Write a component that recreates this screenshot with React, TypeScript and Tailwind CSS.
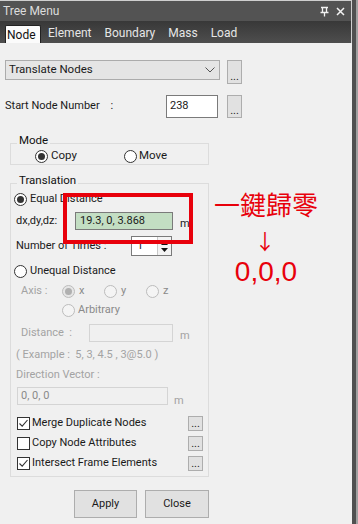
import React from 'react';

const font = { fontFamily: 'Roboto, "Noto Sans", sans-serif' };

function Radio({ checked = false, disabled = false }: { checked?: boolean; disabled?: boolean }) {
  return (
    <span
      className={`flex h-[13px] w-[13px] shrink-0 items-center justify-center rounded-full border ${
        disabled ? (checked ? 'border-[#bcbcbc] bg-[#e6e6e6]' : 'border-[#bcbcbc] bg-[#f4f4f4]') : 'border-[#333] bg-white'
      }`}
    >
      {checked && <span className={`h-[7px] w-[7px] rounded-full ${disabled ? 'bg-[#b0b0b0]' : 'bg-[#333]'}`} />}
    </span>
  );
}

function Check({ checked = false }: { checked?: boolean }) {
  return (
    <span className="flex h-[13px] w-[13px] shrink-0 items-center justify-center border border-[#333] bg-white">
      {checked && (
        <svg width="11" height="11" viewBox="0 0 11 11">
          <path d="M1.5 5.5 L4.2 8.2 L9.5 2" fill="none" stroke="#333" strokeWidth="1.1" />
        </svg>
      )}
    </span>
  );
}

function Dots({ h = 'h-[15px]' }: { h?: string }) {
  return (
    <span className={`flex w-[15px] ${h} shrink-0 items-end justify-center border border-[#adadad] bg-[#e1e1e1] pb-[1px] text-[11px] leading-[11px] text-[#222]`}>
      ...
    </span>
  );
}

function Group({ label, className, children }: { label: string; className?: string; children: React.ReactNode }) {
  return (
    <div className={`relative mx-[10px] w-[199px] border border-[#dcdcdc] ${className ?? ''}`}>
      <span className="absolute left-[6px] top-[-11px] bg-[#f0f0f0] px-[2px] text-[11.5px] leading-[14px] text-[#111]">{label}</span>
      {children}
    </div>
  );
}

export default function App() {
  return (
    <div className="flex h-[524px] w-[358px] bg-[#f0f0f0] text-[11px] text-[#1a1a1a]" style={font}>
      <div className="relative flex w-[352px] flex-col">
        {/* title bar */}
        <div className="flex h-[21px] items-center border-t border-r border-[#cfcfcf] bg-[#535353] pl-[3px] pr-[6px] text-[12px] text-[#dcdcdc]">
          <span className="flex-1">Tree Menu</span>
          <svg width="9" height="11" viewBox="0 0 9 11" className="mr-[7px]">
            <path d="M1 1.5 H8 M2.5 1.5 V6 M6.5 1.5 V6 M0.5 6.5 H8.5 M4.5 6.5 V10.5" stroke="#f2f2f2" strokeWidth="1.3" fill="none" />
          </svg>
          <svg width="9" height="9" viewBox="0 0 9 9">
            <path d="M1 1 L8 8 M8 1 L1 8" stroke="#f2f2f2" strokeWidth="1.5" />
          </svg>
        </div>
        {/* tab bar */}
        <div className="flex h-[22px] items-end border-r border-[#cfcfcf] bg-gradient-to-b from-[#383838] to-[#4e4e4e] text-[12px] text-[#e6e6e6]">
          <span className="ml-[5px] flex h-[18px] w-[36px] items-center rounded-t-[2px] border border-b-0 border-[#222] bg-[#fbfbfb] pl-[1px] pt-[1px] text-[#111]">
            Node
          </span>
          <span className="mb-[1px] ml-[7px]">Element</span>
          <span className="mb-[1px] ml-[13px]">Boundary</span>
          <span className="mb-[1px] ml-[13px]">Mass</span>
          <span className="mb-[1px] ml-[13px]">Load</span>
        </div>

        {/* content */}
        <div className="flex flex-col pt-[17px]">
          <div className="flex h-[24px] items-start">
            <div className="ml-[5px] flex h-[20px] w-[215px] items-center border border-[#acacac] bg-[#e5e5e5] pl-[3px] pr-[4px] text-[11.5px]">
              <span className="flex-1">Translate Nodes</span>
              <svg width="10" height="6" viewBox="0 0 10 6">
                <path d="M0.5 0.5 L5 5 L9.5 0.5" fill="none" stroke="#555" strokeWidth="1" />
              </svg>
            </div>
            <span className="ml-[7px]">
              <Dots h="h-[24px]" />
            </span>
          </div>

          <div className="mt-[11px] flex h-[23px] items-center">
            <span className="ml-[5px] w-[161px]">Start Node Number&nbsp;&nbsp;&nbsp;&nbsp;:</span>
            <span className="flex h-[23px] w-[52px] items-start border border-[#7a7a7a] bg-white pl-[3px] pt-[2px]">238</span>
            <span className="ml-[9px]">
              <Dots h="h-[23px]" />
            </span>
          </div>

          <Group label="Mode" className="mt-[25px]">
            <div className="flex h-[20px] items-center pt-[4px] text-[11.5px]">
              <span className="ml-[24px]">
                <Radio checked />
              </span>
              <span className="ml-[3px] w-[73px]">Copy</span>
              <Radio />
              <span className="ml-[2px]">Move</span>
            </div>
          </Group>

          <Group label="Translation" className="mt-[18px] pb-[5px]">
            <div className="mt-[7px] flex h-[16px] items-center pl-[3px]">
              <Radio checked />
              <span className="ml-[3px]">Equal Distance</span>
            </div>
            <div className="mt-[5px] flex h-[18px] items-center pl-[5px]">
              <span className="w-[59px]">dx,dy,dz:</span>
              <span className="flex h-[18px] w-[98px] items-center border border-[#7a7a7a] bg-[#c3dec3] pl-[4px]">19.3, 0, 3.868</span>
              <span className="ml-[7px] mt-[6px]">m</span>
            </div>
            <div className="mt-[6px] flex h-[20px] items-center pl-[5px]">
              <span className="w-[115px]">Number of Times :</span>
              <span className="flex h-[20px] w-[41px] items-center border border-[#7a7a7a] bg-white">
                <span className="flex-1 pl-[5px]">1</span>
                <span className="flex h-full w-[14px] flex-col items-center justify-center gap-[3px] border-l border-[#c8c8c8] bg-[#f3f3f3]">
                  <svg width="7" height="4" viewBox="0 0 7 4">
                    <path d="M0 4 L3.5 0 L7 4 Z" fill="#111" />
                  </svg>
                  <svg width="7" height="4" viewBox="0 0 7 4">
                    <path d="M0 0 L3.5 4 L7 0 Z" fill="#111" />
                  </svg>
                </span>
              </span>
            </div>
            <div className="mt-[7px] flex h-[16px] items-center pl-[3px]">
              <Radio />
              <span className="ml-[3px]">Unequal Distance</span>
            </div>
            <div className="mt-[4px] flex h-[16px] items-center pl-[10px] text-[#8a8a8a]">
              <span className="w-[41px] text-[#a3a3a3]">Axis :</span>
              <Radio checked disabled />
              <span className="ml-[4px] w-[25px]">x</span>
              <Radio disabled />
              <span className="ml-[4px] w-[25px]">y</span>
              <Radio disabled />
              <span className="ml-[4px]">z</span>
            </div>
            <div className="mt-[3px] flex h-[16px] items-center pl-[51px] text-[#8a8a8a]">
              <Radio disabled />
              <span className="ml-[3px]">Arbitrary</span>
            </div>
            <div className="mt-[6px] flex h-[18px] items-center pl-[10px] text-[#a3a3a3]">
              <span className="w-[68px]">Distance&nbsp;&nbsp;:</span>
              <span className="h-[18px] w-[84px] border border-[#d4d4d4] bg-[#f0f0f0]" />
              <span className="ml-[7px] mt-[6px]">m</span>
            </div>
            <div className="mt-[6px] flex h-[14px] items-center pl-[5px] text-[#a3a3a3]">( Example :&nbsp;&nbsp;5, 3, 4.5 , 3@5.0 )</div>
            <div className="mt-[6px] flex h-[14px] items-center pl-[5px] text-[#a3a3a3]">Direction Vector :</div>
            <div className="mt-[5px] flex h-[18px] items-center pl-[6px] text-[#9a9a9a]">
              <span className="flex h-[18px] w-[151px] items-center border border-[#d4d4d4] bg-[#f0f0f0] pl-[3px] text-[#8a8a8a]">0, 0, 0</span>
              <span className="ml-[6px] mt-[10px] text-[#a3a3a3]">m</span>
            </div>
            <div className="mt-[11px] flex h-[15px] items-center pl-[6px]">
              <Check checked />
              <span className="ml-[2px] w-[156px]">Merge Duplicate Nodes</span>
              <Dots />
            </div>
            <div className="mt-[5px] flex h-[15px] items-center pl-[6px]">
              <Check />
              <span className="ml-[2px] w-[156px]">Copy Node Attributes</span>
              <Dots />
            </div>
            <div className="mt-[5px] flex h-[15px] items-center pl-[6px]">
              <Check checked />
              <span className="ml-[2px] w-[156px]">Intersect Frame Elements</span>
              <Dots />
            </div>
          </Group>

          <div className="mt-[13px] flex gap-[8px] pl-[74px]">
            <span className="flex h-[28px] w-[63px] items-center justify-center border border-[#adadad] bg-[#e1e1e1]">Apply</span>
            <span className="flex h-[28px] w-[64px] items-center justify-center border border-[#adadad] bg-[#e1e1e1]">Close</span>
          </div>
        </div>

        {/* annotation overlay */}
        <div className="absolute left-[63px] top-[193px] h-[51px] w-[130px] border-[4px] border-[#e8000b]" />
        <div
          className="absolute left-[211px] top-[186px] flex w-[110px] flex-col items-center text-[#e8000b]"
          style={{ fontFamily: '"Noto Sans CJK TC", "Noto Sans", sans-serif' }}
        >
          <span className="text-[26px] leading-[36px]">一鍵歸零</span>
          <span className="mt-[3px] pr-[2px] text-[21px] leading-[30px]">↓</span>
          <span className="mt-[1px] text-[28px] leading-[32px]" style={{ fontFamily: '"Liberation Sans", Arial, sans-serif' }}>
            0,0,0
          </span>
        </div>
      </div>
      <div className="w-[4px] bg-[#505050]" />
      <div className="w-[2px] bg-[#a0a0a0]" />
    </div>
  );
}
